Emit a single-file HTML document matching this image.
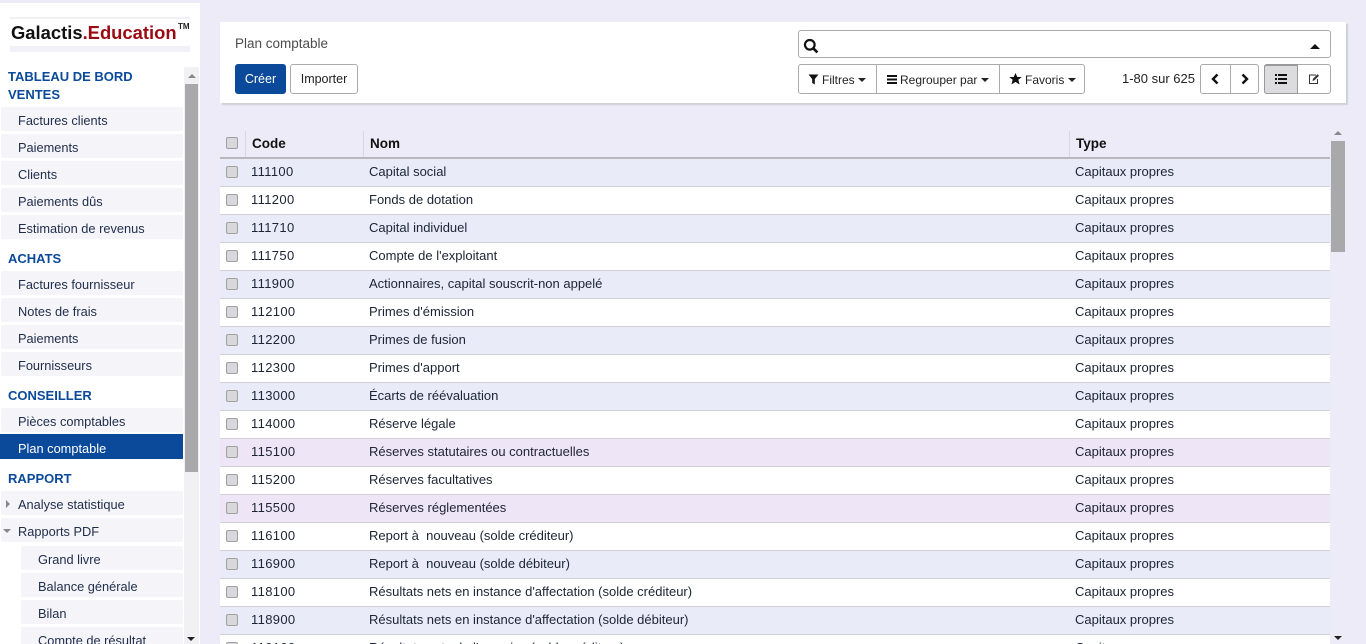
<!DOCTYPE html>
<html lang="fr">
<head>
<meta charset="utf-8">
<title>Plan comptable</title>
<style>
html,body{margin:0;padding:0;width:1366px;height:644px;overflow:hidden}
body{background:#ecebf7;font-family:"Liberation Sans",sans-serif;font-size:13px;color:#1c2433;position:relative}
.a{position:absolute;white-space:nowrap}
#side{position:absolute;left:0;top:3px;width:200px;height:641px;background:#fff}
.h{position:absolute;left:8px;font-weight:bold;color:#0b4a9a;line-height:18px;white-space:nowrap;margin-top:1px}
.i{position:absolute;left:1px;width:182px;height:24px;background:#f5f4f9;line-height:24px;padding:0;border-radius:2px}
.i span{position:absolute;left:17px;top:2px;white-space:nowrap;color:#1f2d4a;font-size:12.8px}
.i.s{left:21px;width:162px}
.i.act{left:0;width:183px;height:25px;background:#0b4a9a;border-radius:0}
.i.act span{left:18px;top:3px;color:#fff}
#cp{position:absolute;left:220px;top:22px;width:1126px;height:81px;background:#fff;box-shadow:2px 2px 1px #cfcfd6}
.btn{position:absolute;box-sizing:border-box;top:64px;height:30px;border:1px solid #aaa;border-radius:3px;background:#fff;line-height:29px;text-align:center;color:#222;font-size:12.5px}
.sep{position:absolute;width:1px;background:#aaa}
.row{position:absolute;left:220px;width:1110px;height:27px;border-bottom:1px solid #d2d2d6;background:#e9ebf8}
.row.p{background:#eee5f6}
.row.w{background:#fff}
.cb{position:absolute;box-sizing:border-box;left:6px;width:12px;height:12px;background:#d8d8dc;border:1px solid #a0a0a4;border-radius:2px}
.row b{font-weight:normal;position:absolute;top:5px;line-height:16px;white-space:nowrap;color:#1c2433}
.c1{left:31px;letter-spacing:.35px}.c2{left:149px}.c3{left:855px}
.th{position:absolute;top:136px;font-weight:bold;color:#111;line-height:16px;font-size:13.5px}
.tsep{position:absolute;top:131px;height:26px;width:1px;background:#d8d8de}
.tri{position:absolute;width:0;height:0}
.up{border-left:4px solid transparent;border-right:4px solid transparent;border-bottom:4px solid #888}
.dn{border-left:4px solid transparent;border-right:4px solid transparent;border-top:4px solid #222}
.car{display:inline-block;width:0;height:0;border-left:4px solid transparent;border-right:4px solid transparent;border-top:4px solid #222;vertical-align:2px;margin-left:0}
</style>
</head>
<body>
<div id="side"></div>

<!-- logo -->
<div class="a" style="left:10px;top:17px;width:180px;height:2px;background:#f0f0f6"></div>
<div class="a" style="left:10px;top:46px;width:180px;height:6px;background:#f1f1f7"></div>
<div class="a" style="left:11px;top:22px;font-size:18.4px;font-weight:bold;line-height:22px;color:#111">Galactis<span style="color:#9a0a12">.Education</span></div>
<div class="a" style="left:178px;top:22px;font-size:8px;font-weight:bold;line-height:10px;color:#222">TM</div>

<!-- sidebar -->
<div class="h" style="top:67px">TABLEAU DE BORD</div>
<div class="h" style="top:85px">VENTES</div>
<div class="i" style="top:107px"><span>Factures clients</span></div>
<div class="i" style="top:134px"><span>Paiements</span></div>
<div class="i" style="top:161px"><span>Clients</span></div>
<div class="i" style="top:188px"><span>Paiements dûs</span></div>
<div class="i" style="top:215px"><span>Estimation de revenus</span></div>
<div class="h" style="top:249px">ACHATS</div>
<div class="i" style="top:271px"><span>Factures fournisseur</span></div>
<div class="i" style="top:298px"><span>Notes de frais</span></div>
<div class="i" style="top:325px"><span>Paiements</span></div>
<div class="i" style="top:352px"><span>Fournisseurs</span></div>
<div class="h" style="top:386px">CONSEILLER</div>
<div class="i" style="top:408px"><span>Pièces comptables</span></div>
<div class="i act" style="top:434px"><span>Plan comptable</span></div>
<div class="h" style="top:469px">RAPPORT</div>
<div class="i" style="top:491px"><span>Analyse statistique</span></div>
<div class="i" style="top:518px"><span>Rapports PDF</span></div>
<div class="tri" style="left:6px;top:500px;border-top:4px solid transparent;border-bottom:4px solid transparent;border-left:4px solid #888"></div>
<div class="tri" style="left:3px;top:529px;border-left:4px solid transparent;border-right:4px solid transparent;border-top:4px solid #888"></div>
<div class="i s" style="top:546px"><span>Grand livre</span></div>
<div class="i s" style="top:573px"><span>Balance générale</span></div>
<div class="i s" style="top:600px"><span>Bilan</span></div>
<div class="i s" style="top:627px"><span>Compte de résultat</span></div>

<!-- sidebar scrollbar -->
<div class="a" style="left:184px;top:67px;width:15px;height:577px;background:#f1f1f4"></div>
<div class="a" style="left:185px;top:84px;width:13px;height:388px;background:#a9a9ab"></div>
<div class="tri up" style="left:188px;top:74px"></div>
<div class="tri dn" style="left:187px;top:637px"></div>

<!-- control panel -->
<div id="cp"></div>
<div class="a" style="left:235px;top:35px;line-height:17px;color:#4c4c4c;font-size:13.5px">Plan comptable</div>
<div class="btn" style="left:235px;width:51px;background:#0b4a9a;border-color:#0b4a9a;color:#fff">Créer</div>
<div class="btn" style="left:290px;width:68px">Importer</div>

<div class="a" style="left:798px;top:30px;width:533px;height:28px;box-sizing:border-box;border:1px solid #aaa;border-radius:3px;background:#fff"></div>
<svg class="a" style="left:803px;top:38px" width="16" height="16" viewBox="0 0 16 16"><circle cx="6.8" cy="6.8" r="4.8" fill="none" stroke="#111" stroke-width="2.2"/><path d="M10.4 10.4L14.4 14.4" stroke="#111" stroke-width="2.6"/></svg>
<div class="tri" style="left:1310px;top:44px;border-left:5px solid transparent;border-right:5px solid transparent;border-bottom:5px solid #111"></div>

<div class="btn" style="left:798px;width:287px"></div>
<div class="sep" style="left:876px;top:64px;height:30px"></div>
<div class="sep" style="left:999px;top:64px;height:30px"></div>
<svg class="a" style="left:808px;top:74px" width="11" height="11" viewBox="0 0 11 11"><path d="M0.5 0.5H10.5L6.8 5V10.5L4.2 9V5Z" fill="#111"/></svg>
<div class="a" style="left:822px;top:72px;font-size:12px;line-height:16px;color:#222">Filtres <i class="car"></i></div>
<svg class="a" style="left:887px;top:75px" width="10" height="9" viewBox="0 0 10 9"><path d="M0 0H10V2H0ZM0 3.5H10V5.5H0ZM0 7H10V9H0Z" fill="#111"/></svg>
<div class="a" style="left:900px;top:72px;font-size:12px;line-height:16px;color:#222">Regrouper par <i class="car"></i></div>
<svg class="a" style="left:1009px;top:73px" width="13" height="12" viewBox="0 0 13 12"><path d="M6.5 0L8.3 4H12.8L9.3 6.8L10.6 11.5L6.5 8.9L2.4 11.5L3.7 6.8L0.2 4H4.7Z" fill="#111"/></svg>
<div class="a" style="left:1025px;top:72px;font-size:12px;line-height:16px;color:#222">Favoris <i class="car"></i></div>

<div class="a" style="left:1122px;top:71px;font-size:13px;line-height:16px;color:#222">1-80 sur 625</div>

<div class="btn" style="left:1200px;width:59px"></div>
<div class="sep" style="left:1230px;top:64px;height:30px"></div>
<svg class="a" style="left:1211px;top:73px" width="9" height="12" viewBox="0 0 9 12"><path d="M6.5 1.5L2 6L6.5 10.5" fill="none" stroke="#111" stroke-width="2.4"/></svg>
<svg class="a" style="left:1240px;top:73px" width="9" height="12" viewBox="0 0 9 12"><path d="M2.5 1.5L7 6L2.5 10.5" fill="none" stroke="#111" stroke-width="2.4"/></svg>

<div class="btn" style="left:1264px;width:67px"></div>
<div class="a" style="left:1264px;top:64px;width:34px;height:30px;box-sizing:border-box;background:#dcdcde;border:1px solid #999;border-top:2px solid #999;border-radius:3px 0 0 3px"></div>
<svg class="a" style="left:1275px;top:74px" width="12" height="10" viewBox="0 0 12 10"><path d="M0 0H2V2H0ZM3 0H12V2H3ZM0 4H2V6H0ZM3 4H12V6H3ZM0 8H2V10H0ZM3 8H12V10H3Z" fill="#111"/></svg>
<svg class="a" style="left:1308px;top:73px" width="12" height="12" viewBox="0 0 12 12"><path d="M8 2H1.5V10.5H9.5V6" fill="none" stroke="#333" stroke-width="1"/><path d="M4.5 8L5 5.8L9.5 1.2L11 2.7L6.5 7.3Z" fill="#333"/></svg>

<!-- table header -->
<div class="cb" style="left:226px;top:137px"></div>
<div class="tsep" style="left:245px"></div>
<div class="tsep" style="left:363px"></div>
<div class="tsep" style="left:1069px"></div>
<div class="th" style="left:252px">Code</div>
<div class="th" style="left:370px">Nom</div>
<div class="th" style="left:1076px">Type</div>
<div class="a" style="left:220px;top:157px;width:1110px;height:2px;background:#b8b8bc"></div>

<!-- rows -->
<div class="row" style="top:159px"><i class="cb" style="top:7px"></i><b class="c1">111100</b><b class="c2">Capital social</b><b class="c3">Capitaux propres</b></div>
<div class="row w" style="top:187px"><i class="cb" style="top:7px"></i><b class="c1">111200</b><b class="c2">Fonds de dotation</b><b class="c3">Capitaux propres</b></div>
<div class="row" style="top:215px"><i class="cb" style="top:7px"></i><b class="c1">111710</b><b class="c2">Capital individuel</b><b class="c3">Capitaux propres</b></div>
<div class="row w" style="top:243px"><i class="cb" style="top:7px"></i><b class="c1">111750</b><b class="c2">Compte de l'exploitant</b><b class="c3">Capitaux propres</b></div>
<div class="row" style="top:271px"><i class="cb" style="top:7px"></i><b class="c1">111900</b><b class="c2">Actionnaires, capital souscrit-non appelé</b><b class="c3">Capitaux propres</b></div>
<div class="row w" style="top:299px"><i class="cb" style="top:7px"></i><b class="c1">112100</b><b class="c2">Primes d'émission</b><b class="c3">Capitaux propres</b></div>
<div class="row" style="top:327px"><i class="cb" style="top:7px"></i><b class="c1">112200</b><b class="c2">Primes de fusion</b><b class="c3">Capitaux propres</b></div>
<div class="row w" style="top:355px"><i class="cb" style="top:7px"></i><b class="c1">112300</b><b class="c2">Primes d'apport</b><b class="c3">Capitaux propres</b></div>
<div class="row" style="top:383px"><i class="cb" style="top:7px"></i><b class="c1">113000</b><b class="c2">Écarts de réévaluation</b><b class="c3">Capitaux propres</b></div>
<div class="row w" style="top:411px"><i class="cb" style="top:7px"></i><b class="c1">114000</b><b class="c2">Réserve légale</b><b class="c3">Capitaux propres</b></div>
<div class="row p" style="top:439px"><i class="cb" style="top:7px"></i><b class="c1">115100</b><b class="c2">Réserves statutaires ou contractuelles</b><b class="c3">Capitaux propres</b></div>
<div class="row w" style="top:467px"><i class="cb" style="top:7px"></i><b class="c1">115200</b><b class="c2">Réserves facultatives</b><b class="c3">Capitaux propres</b></div>
<div class="row p" style="top:495px"><i class="cb" style="top:7px"></i><b class="c1">115500</b><b class="c2">Réserves réglementées</b><b class="c3">Capitaux propres</b></div>
<div class="row w" style="top:523px"><i class="cb" style="top:7px"></i><b class="c1">116100</b><b class="c2">Report à &nbsp;nouveau (solde créditeur)</b><b class="c3">Capitaux propres</b></div>
<div class="row" style="top:551px"><i class="cb" style="top:7px"></i><b class="c1">116900</b><b class="c2">Report à &nbsp;nouveau (solde débiteur)</b><b class="c3">Capitaux propres</b></div>
<div class="row w" style="top:579px"><i class="cb" style="top:7px"></i><b class="c1">118100</b><b class="c2">Résultats nets en instance d'affectation (solde créditeur)</b><b class="c3">Capitaux propres</b></div>
<div class="row" style="top:607px"><i class="cb" style="top:7px"></i><b class="c1">118900</b><b class="c2">Résultats nets en instance d'affectation (solde débiteur)</b><b class="c3">Capitaux propres</b></div>
<div class="row w" style="top:635px"><i class="cb" style="top:7px"></i><b class="c1">119100</b><b class="c2">Résultats nets de l'exercice (solde créditeur)</b><b class="c3">Capitaux propres</b></div>

<!-- table scrollbar -->
<div class="a" style="left:1331px;top:141px;width:14px;height:111px;background:#a9a9ab"></div>
<div class="tri up" style="left:1334px;top:131px"></div>
<div class="tri dn" style="left:1334px;top:636px"></div>
</body>
</html>
